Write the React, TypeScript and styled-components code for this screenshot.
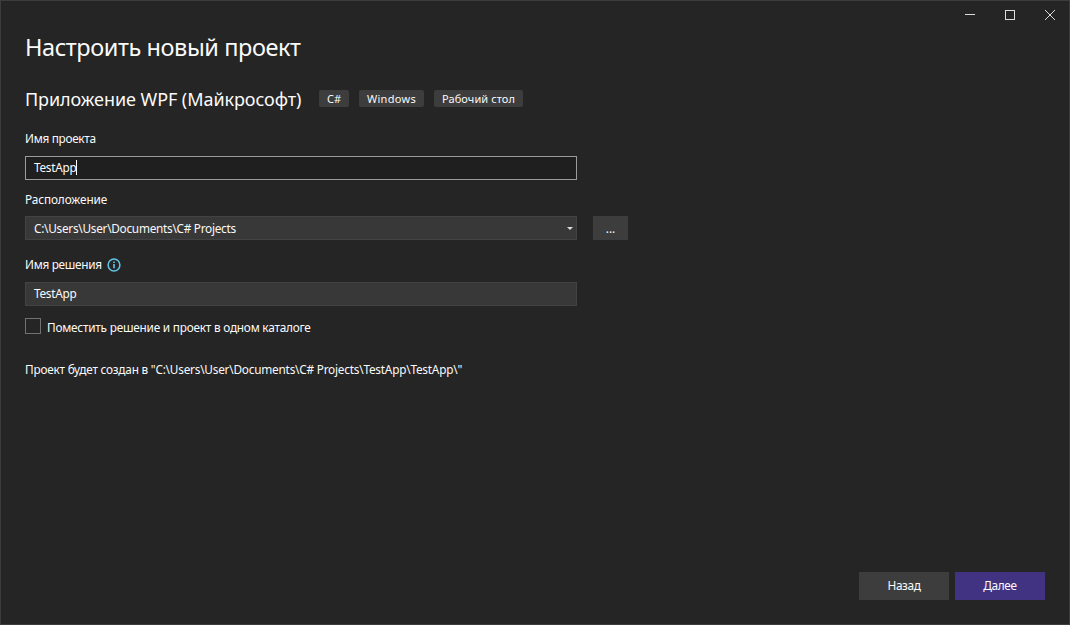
import React from "react";
import styled, { createGlobalStyle } from "styled-components";

const GlobalStyle = createGlobalStyle`
  *, *::before, *::after { box-sizing: border-box; }
  body { margin: 0; background: #252525; }
`;

const Dialog = styled.div`
  display: flex;
  flex-direction: column;
  width: 1070px;
  height: 625px;
  overflow: hidden;
  border: 1px solid #3d3d3d;
  background: #252525;
  color: #fafafa;
  font-family: "Noto Sans", "Segoe UI", sans-serif;
  font-size: 11.8px;
  line-height: 16px;
  letter-spacing: -0.215px;
  white-space: nowrap;
`;

const WindowControls = styled.div`
  display: flex;
  justify-content: flex-end;
  height: 28px;
  margin-right: -1px;
`;

const ControlButton = styled.button`
  display: grid;
  place-items: center;
  width: 40px;
  height: 28px;
  padding: 0;
  border: 0;
  background: transparent;
  color: #dcdcdc;
`;

const Content = styled.main`
  display: flex;
  flex: 1;
  flex-direction: column;
  padding: 0 24px;
`;

const Title = styled.h1`
  margin: 1px 0 0;
  font-size: 23.5px;
  font-weight: 400;
  line-height: 34px;
  letter-spacing: -0.42px;
`;

const TemplateRow = styled.div`
  display: flex;
  align-items: center;
  height: 28px;
  margin-top: 21px;
`;

const TemplateName = styled.h2`
  width: 294px;
  margin: 0;
  font-size: 18px;
  font-weight: 400;
  line-height: 28px;
  letter-spacing: -0.07px;
`;

const Tags = styled.div`
  display: flex;
  gap: 10px;
  margin-bottom: 1px;
`;

const Tag = styled.span<{ $width: number; $spacing?: number }>`
  width: ${(p) => p.$width}px;
  height: 17px;
  border-radius: 2px;
  background: #3d3d3d;
  font-size: 11px;
  line-height: 17px;
  letter-spacing: ${(p) => p.$spacing ?? 0}px;
  text-align: center;
`;

const Field = styled.div<{ $gap: number }>`
  display: flex;
  flex-direction: column;
  gap: ${(p) => p.$gap}px;
`;

const Form = styled.form`
  display: flex;
  flex-direction: column;
  margin-top: 17px;

  & > ${Field}:nth-child(2) { margin-top: 11px; }
  & > ${Field}:nth-child(3) { margin-top: 16px; }
`;

const Label = styled.label<{ $spacing?: number }>`
  display: flex;
  align-items: center;
  gap: 5px;
  height: 16px;
  letter-spacing: ${(p) => p.$spacing ?? -0.29}px;
`;

const ControlRow = styled.div`
  display: flex;
  gap: 16px;
`;

const InputBox = styled.div<{ $focused?: boolean }>`
  display: flex;
  align-items: center;
  width: 552px;
  height: 24px;
  padding: 0 3px 2px 8px;
  border: 1px solid ${(p) => (p.$focused ? "#9b9b9b" : "#434343")};
  background: ${(p) => (p.$focused ? "#1f1f1f" : "#383838")};
  letter-spacing: -0.27px;
`;

const ComboBox = styled(InputBox)`
  padding-bottom: 0;
`;

const Caret = styled.span`
  width: 1px;
  height: 15px;
  margin-top: 1px;
  background: #fff;
`;

const DropArrow = styled.svg`
  margin: 0 0 0 auto;
`;

const Button = styled.button<{ $width: number; $height: number; $primary?: boolean }>`
  width: ${(p) => p.$width}px;
  height: ${(p) => p.$height}px;
  padding: 0 0 2px;
  border: 0;
  background: ${(p) => (p.$primary ? "#413381" : "#3d3d3d")};
  color: inherit;
  font: inherit;
  letter-spacing: -0.35px;
`;

const BrowseButton = styled(Button)`
  padding-bottom: 1px;
  letter-spacing: 0;
`;

const CheckRow = styled.label`
  display: flex;
  gap: 6px;
  height: 17px;
  margin-top: 12px;
`;

const CheckBox = styled.span`
  width: 16px;
  height: 16px;
  border: 1px solid #717171;
`;

const CheckText = styled.span`
  margin-top: 1px;
`;

const Summary = styled.p`
  margin: 26px 0 0;
`;

const Footer = styled.footer`
  display: flex;
  justify-content: flex-end;
  gap: 6px;
  margin: auto 0 24px;
`;

const InfoSvg = styled.svg`
  margin-top: 2px;
`;

const InfoIcon = () => (
  <InfoSvg width="14" height="14" viewBox="0 0 14 14" fill="none">
    <circle cx="7" cy="7" r="5.9" stroke="#62c5e8" strokeWidth="1.5" />
    <path d="M7 6v4.3M7 3.6v1.4" stroke="#62c5e8" strokeWidth="1.6" />
  </InfoSvg>
);

export default function App() {
  return (
    <>
      <GlobalStyle />
      <Dialog>
        <WindowControls>
          <ControlButton aria-label="Свернуть">
            <svg width="10" height="10" shapeRendering="crispEdges">
              <path d="M0 4.5h10" stroke="currentColor" />
            </svg>
          </ControlButton>
          <ControlButton aria-label="Развернуть">
            <svg width="10" height="10" fill="none" shapeRendering="crispEdges">
              <path d="M.5.5h9v9h-9z" stroke="currentColor" />
            </svg>
          </ControlButton>
          <ControlButton aria-label="Закрыть">
            <svg width="10" height="10">
              <path d="M0 0l10 10M10 0L0 10" stroke="currentColor" />
            </svg>
          </ControlButton>
        </WindowControls>
        <Content>
          <Title>Настроить новый проект</Title>
          <TemplateRow>
            <TemplateName>Приложение WPF (Майкрософт)</TemplateName>
            <Tags>
              <Tag $width={30}>C#</Tag>
              <Tag $width={65} $spacing={0.3}>Windows</Tag>
              <Tag $width={89} $spacing={0.1}>Рабочий стол</Tag>
            </Tags>
          </TemplateRow>
          <Form>
            <Field $gap={10}>
              <Label>Имя проекта</Label>
              <InputBox $focused>
                TestApp
                <Caret />
              </InputBox>
            </Field>
            <Field $gap={9}>
              <Label $spacing={-0.1}>Расположение</Label>
              <ControlRow>
                <ComboBox>
                  {"C:\\Users\\User\\Documents\\C# Projects"}
                  <DropArrow width="6" height="3">
                    <path d="M0 0h6L3 3z" fill="#dcdcdc" />
                  </DropArrow>
                </ComboBox>
                <BrowseButton type="button" $width={35} $height={24}>...</BrowseButton>
              </ControlRow>
            </Field>
            <Field $gap={10}>
              <Label>
                Имя решения
                <InfoIcon />
              </Label>
              <InputBox>TestApp</InputBox>
            </Field>
            <CheckRow>
              <CheckBox />
              <CheckText>Поместить решение и проект в одном каталоге</CheckText>
            </CheckRow>
          </Form>
          <Summary>{'Проект будет создан в "C:\\Users\\User\\Documents\\C# Projects\\TestApp\\TestApp\\"'}</Summary>
          <Footer>
            <Button $width={90} $height={28}>Назад</Button>
            <Button $width={90} $height={28} $primary>Далее</Button>
          </Footer>
        </Content>
      </Dialog>
    </>
  );
}
